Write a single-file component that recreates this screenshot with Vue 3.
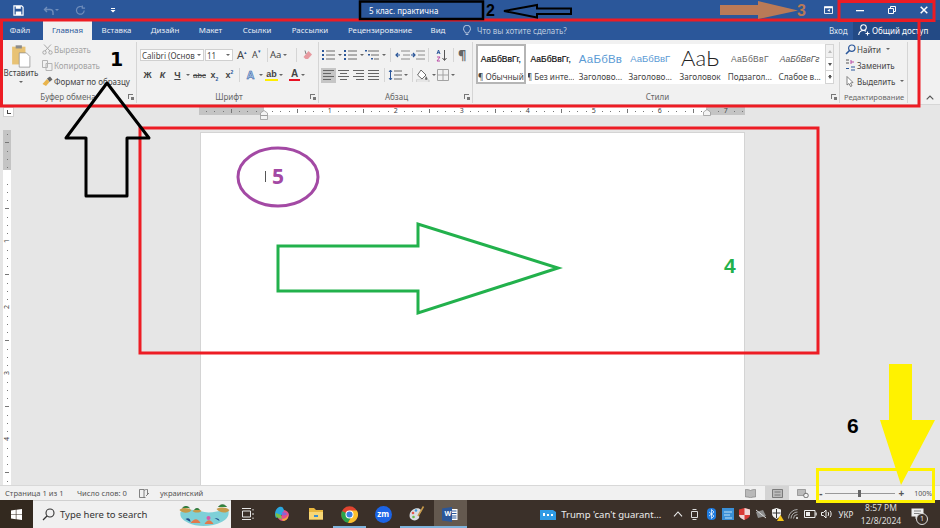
<script setup>
const tabs = [
    { name: "Вставка", w: 49 },
    { name: "Дизайн", w: 48 },
    { name: "Макет", w: 43 },
    { name: "Ссылки", w: 50 },
    { name: "Рассылки", w: 56 },
    { name: "Рецензирование", w: 84 },
    { name: "Вид", w: 32 },
];

const styleItems = [
    { name: "¶ Обычный", sample: "АаБбВвГг,", cls: "s-normal", active: true },
    { name: "¶ Без инте...", sample: "АаБбВвГг,", cls: "s-normal" },
    { name: "Заголово...", sample: "АаБбВв", cls: "s-h1" },
    { name: "Заголово...", sample: "АаБбВвГ", cls: "s-h2" },
    { name: "Заголовок", sample: "АаЬ", cls: "s-title" },
    { name: "Подзагол...", sample: "АаБбВвГ", cls: "s-sub" },
    { name: "Слабое в...", sample: "АаБбВвГг", cls: "s-em" },
];

// ruler cells are one eighth of an inch
const hTicks = [];
for (let i = -7; i <= 58; i++) hTicks.push(i);
const vTicks = [];
for (let i = -5; i <= 38; i++) vTicks.push(i);

const tickLabel = (i) => (i !== 0 && i % 8 === 0 ? Math.abs(i / 8) : "");
const tickClass = (i) => {
    if (i % 8 === 0) return "t-num";
    if (i % 4 === 0) return "t-long";
    return "t-dot";
};
</script>

<template>
    <div class="screen">
        <!-- TITLE BAR -->
        <header class="titlebar">
            <div class="qat">
                <svg class="save" width="11" height="11" viewBox="0 0 12 12">
                    <path d="M1 1h8.5L11 2.5V11H1z" fill="none" stroke="#fff" stroke-width="1.3" />
                    <path d="M3 1.2h5.5v3H3zM3 7h6v3.8H3z" fill="#fff" />
                </svg>
                <svg class="undo" width="16" height="11" viewBox="0 0 16 11">
                    <path d="M4 2 1.5 4.5 4 7M2 4.5h5a3 3 0 0 1 3 3V10" fill="none" stroke="#6f8dbb" stroke-width="1.4" />
                    <path d="M12 4h4l-2 2z" fill="#6f8dbb" />
                </svg>
                <svg class="redo" width="11" height="11" viewBox="0 0 12 12">
                    <path d="M8.5 2.6A4.2 4.2 0 1 0 10 6M8 .5v3h3" fill="none" stroke="#6f8dbb" stroke-width="1.3" />
                </svg>
                <svg class="custom" width="6" height="6" viewBox="0 0 6 6">
                    <path d="M1 1h4v1H1zM.5 3h5L3 5.6z" fill="#fff" />
                </svg>
            </div>
            <div class="doc-title">5 клас. практична</div>
            <div class="win-btns">
                <svg class="ribbon-opt" width="9" height="8" viewBox="0 0 10 9">
                    <path d="M.5.5h9v8h-9z" fill="none" stroke="#fff" />
                    <path d="M.5 1h9v1.5h-9zM6.5 3.5v3L3.5 5z" fill="#fff" />
                </svg>
                <svg class="win-min" width="8" height="8" viewBox="0 0 8 8"><path d="M0 4h8v1.3H0z" fill="#fff" /></svg>
                <svg class="win-max" width="8" height="8" viewBox="0 0 8 8">
                    <path d="M.5 2.5h5v5h-5zM2.5 2.5v-2h5v5h-2" fill="none" stroke="#fff" />
                </svg>
                <svg class="win-close" width="8" height="8" viewBox="0 0 8 8">
                    <path d="M.7.7l6.6 6.6M7.3.7.7 7.3" stroke="#fff" stroke-width="1.5" />
                </svg>
            </div>
        </header>

        <!-- TABS -->
        <nav class="tabs">
            <div class="tab tab-file">Файл</div>
            <div class="tab tab-active">Главная</div>
            <div v-for="t in tabs" :key="t.name" class="tab" :style="{ width: t.w + 'px' }">{{ t.name }}</div>
            <svg class="bulb" width="8" height="11" viewBox="0 0 8 11">
                <path d="M2.5 8C2.3 6.5.5 5.8.5 3.7a3.5 3.5 0 0 1 7 0C7.5 5.8 5.7 6.5 5.5 8zM2.7 9.5h2.6" fill="none" stroke="#c6d3e6" stroke-width=".9" />
            </svg>
            <div class="tell-me">Что вы хотите сделать?</div>
            <div class="sign-in">Вход</div>
            <div class="share">
                <svg width="13" height="12" viewBox="0 0 13 12">
                    <circle cx="5.5" cy="3.5" r="2.8" fill="none" stroke="#fff" stroke-width="1.1" />
                    <path d="M.7 11c.3-3 2.2-4.5 4.8-4.5 1 0 1.8.2 2.5.7M9.5 7.5v4M7.5 9.5h4" fill="none" stroke="#fff" stroke-width="1.1" />
                </svg>
                <span>Общий доступ</span>
            </div>
        </nav>

        <!-- RIBBON -->
        <section class="ribbon">
            <div class="group g-clip">
                <div class="group-body clip-body">
                    <div class="paste">
                        <svg width="20" height="24" viewBox="0 0 22 27">
                            <path d="M1 3h15v20H1z" fill="#e8c274" />
                            <path d="M5 1.5h7V5H5z" fill="#8b8b8b" />
                            <path d="M9 10h8l4 4v12H9z" fill="#fff" stroke="#8a8a8a" stroke-width=".8" />
                        </svg>
                        <span>Вставить</span>
                        <i class="caret"></i>
                    </div>
                    <div class="clip-list">
                        <div class="clip-row muted">
                            <svg width="11" height="11" viewBox="0 0 11 11">
                                <path d="M2 .5 8 7M9 .5 3 7" stroke="#a9a9a9" fill="none" />
                                <circle cx="2.5" cy="8.5" r="1.7" fill="none" stroke="#a9a9a9" />
                                <circle cx="8.5" cy="8.5" r="1.7" fill="none" stroke="#a9a9a9" />
                            </svg>
                            Вырезать
                        </div>
                        <div class="clip-row muted">
                            <svg width="11" height="11" viewBox="0 0 11 11">
                                <path d="M.5.5h5v7h-5zM4 3.5h6v7H4z" fill="#f1f1f1" stroke="#b3b3b3" />
                            </svg>
                            Копировать
                        </div>
                        <div class="clip-row">
                            <svg width="11" height="11" viewBox="0 0 11 11">
                                <path d="M5 2.5 8 .5l2.5 3L7.5 6z" fill="#666" />
                                <path d="M5 3 7.5 6 4 10 .5 8z" fill="#e9b44c" />
                            </svg>
                            Формат по образцу
                        </div>
                    </div>
                </div>
                <div class="group-label">
                    Буфер обмена
                    <i class="launcher"></i>
                </div>
            </div>

            <div class="group g-font">
                <div class="group-body col">
                    <div class="row row-1">
                        <div class="select sel-name">Calibri (Основ<i class="caret"></i></div>
                        <div class="select sel-size">11<i class="caret"></i></div>
                        <div class="gl gl-grow">A<sup>▴</sup></div>
                        <div class="gl gl-shrink">A<sup>▾</sup></div>
                        <div class="sep"></div>
                        <div class="gl gl-case">Aa<i class="caret"></i></div>
                        <div class="sep"></div>
                        <svg class="eraser" width="11" height="11" viewBox="0 0 11 11">
                            <path d="M6.5 1 10 4.5 6 9H3.5L1.5 7z" fill="#e79aa0" />
                            <path d="M3 .5 4 4" stroke="#7a7a7a" />
                        </svg>
                    </div>
                    <div class="row row-2">
                        <b class="fmt">Ж</b>
                        <b class="fmt it">К</b>
                        <b class="fmt un">Ч</b><i class="caret c-fmt"></i>
                        <span class="fmt strike">abc</span>
                        <b class="fmt">x<sub>2</sub></b>
                        <b class="fmt">x<sup class="sup-b">2</sup></b>
                        <div class="sep sep-2"></div>
                        <span class="fmt glow">A</span><i class="caret c-fmt"></i>
                        <span class="fmt hl">ab</span><i class="caret c-fmt"></i>
                        <span class="fmt color">A</span><i class="caret c-fmt"></i>
                    </div>
                </div>
                <div class="group-label">
                    Шрифт
                    <i class="launcher"></i>
                </div>
            </div>

            <div class="group g-para">
                <div class="group-body col">
                    <div class="row row-1 para-1">
                        <svg class="pi" width="15" height="12" viewBox="0 0 15 12">
                            <path d="M1 1h2v2H1zM1 5h2v2H1zM1 9h2v2H1z" fill="#2b579a" />
                            <path d="M5 2h9M5 6h9M5 10h9" stroke="#6a6a6a" />
                        </svg><i class="caret c-para"></i>
                        <svg class="pi" width="15" height="12" viewBox="0 0 15 12">
                            <path d="M1 1h2v2H1zM1 5h2v2H1zM1 9h2v2H1z" fill="#2b579a" />
                            <path d="M5 2h9M5 6h9M5 10h9" stroke="#6a6a6a" />
                        </svg><i class="caret c-para"></i>
                        <svg class="pi" width="15" height="12" viewBox="0 0 15 12">
                            <path d="M0 1h2v1.5H0zM3 5h2v1.5H3zM6 9h2v1.5H6z" fill="#2b579a" />
                            <path d="M3 2h11M6 6h8M9 10h5" stroke="#6a6a6a" />
                        </svg><i class="caret c-para"></i>
                        <div class="sep sep-p"></div>
                        <svg class="pi" width="15" height="12" viewBox="0 0 15 12">
                            <path d="M6 2h9M6 10h9M8 6h7" stroke="#8a8a8a" /><path d="M5 6H1M3 4 1 6l2 2" fill="none" stroke="#2b579a" stroke-width="1.2" />
                        </svg>
                        <svg class="pi" width="15" height="12" viewBox="0 0 15 12">
                            <path d="M6 2h9M6 10h9M8 6h7" stroke="#8a8a8a" /><path d="M1 6h4M3 4l2 2-2 2" fill="none" stroke="#2b579a" stroke-width="1.2" />
                        </svg>
                        <div class="sep sep-p"></div>
                        <svg class="pi sort" width="13" height="13" viewBox="0 0 13 13">
                            <path d="M2 5 3.5 1 5 5M2.5 3.7h2" fill="none" stroke="#2b579a" />
                            <path d="M2 8h3l-3 4h3" fill="none" stroke="#b94aa5" />
                            <path d="M9.5 1v10M7.5 9l2 2.5 2-2.5" fill="none" stroke="#555" />
                        </svg>
                        <div class="sep sep-p"></div>
                        <span class="pilcrow">¶</span>
                    </div>
                    <div class="row row-2 para-2">
                        <div class="al al-on"><i></i><i class="sh"></i><i></i><i class="sh"></i></div>
                        <div class="al al-c"><i></i><i class="sh"></i><i></i><i class="sh"></i></div>
                        <div class="al al-r"><i></i><i class="sh"></i><i></i><i class="sh"></i></div>
                        <div class="al"><i></i><i></i><i></i><i></i></div>
                        <div class="sep sep-a"></div>
                        <svg class="pi" width="14" height="12" viewBox="0 0 14 12">
                            <path d="M2.5 1v10M1 3l1.5-2L4 3M1 9l1.5 2L4 9" fill="none" stroke="#2b579a" />
                            <path d="M6 2h8M6 6h8M6 10h8" stroke="#6a6a6a" />
                        </svg><i class="caret c-para"></i>
                        <div class="sep sep-a"></div>
                        <svg class="pi" width="14" height="13" viewBox="0 0 14 13">
                            <path d="M5 1 10 6 6 10 1.5 6z" fill="#fff" stroke="#6a6a6a" />
                            <path d="M10 7c1 1.5 1.5 2 1.5 2.8a1 1 0 0 1-2.5 0z" fill="#6a6a6a" />
                            <path d="M0 11h13v2H0z" fill="#fff" stroke="#999" stroke-width=".5" />
                        </svg><i class="caret c-para"></i>
                        <svg class="pi" width="12" height="12" viewBox="0 0 12 12">
                            <path d="M.5.5h11v11H.5zM6 .5v11M.5 6h11" fill="none" stroke="#a3a3a3" />
                        </svg><i class="caret c-para"></i>
                    </div>
                </div>
                <div class="group-label">
                    Абзац
                    <i class="launcher"></i>
                </div>
            </div>

            <div class="group g-styles">
                <div class="group-body gallery-wrap">
                    <div class="gallery">
                        <div v-for="s in styleItems" :key="s.cls + s.name" class="style-item" :class="{ active: s.active }">
                            <div class="sample" :class="s.cls">{{ s.sample }}</div>
                            <div class="style-name">{{ s.name }}</div>
                        </div>
                    </div>
                    <div class="gallery-scroll">
                        <div class="gs gs-off"><i class="tri up"></i></div>
                        <div class="gs"><i class="tri"></i></div>
                        <div class="gs"><i class="tri more"></i></div>
                    </div>
                </div>
                <div class="group-label">
                    Стили
                    <i class="launcher"></i>
                </div>
            </div>

            <div class="group g-edit">
                <div class="group-body edit-list">
                    <div class="clip-row">
                        <svg width="11" height="11" viewBox="0 0 11 11">
                            <circle cx="6.8" cy="4.2" r="3.2" fill="none" stroke="#2b579a" stroke-width="1.2" />
                            <path d="M4.5 6.5 1 10" stroke="#2b579a" stroke-width="1.6" />
                        </svg>
                        Найти<i class="caret c-edit"></i>
                    </div>
                    <div class="clip-row">
                        <svg width="11" height="12" viewBox="0 0 11 12">
                            <path d="M1 1h3M1 4h3" stroke="#555" />
                            <path d="M6 1v4M6 3h3" stroke="#b94aa5" />
                            <path d="M1 9.5h3M6 8h4M6 11h4" stroke="#2b579a" />
                        </svg>
                        Заменить
                    </div>
                    <div class="clip-row">
                        <svg width="11" height="11" viewBox="0 0 11 11">
                            <path d="M2 .5V9l2-1.500 1.500 3 1.500-.7L5.500 7 8 6.500z" fill="#fff" stroke="#666" stroke-width=".8" />
                        </svg>
                        Выделить<i class="caret c-edit"></i>
                    </div>
                </div>
                <div class="group-label">Редактирование</div>
            </div>
            <svg class="collapse" width="8" height="5" viewBox="0 0 8 5">
                <path d="M.7 4.3 4 1l3.3 3.3" fill="none" stroke="#555" stroke-width="1.2" />
            </svg>
        </section>

        <!-- HORIZONTAL RULER -->
        <div class="ruler-row">
            <div class="tab-stop"><i></i></div>
            <div class="h-ruler">
                <div class="h-ticks">
                    <span v-for="i in hTicks" :key="i" class="h-tick" :class="tickClass(i)">{{ tickLabel(i) }}</span>
                </div>
            </div>
            <svg class="indent ind-left" width="8" height="10" viewBox="0 0 8 10">
                <path d="M4 .5 7.500 3v2.500H.5V3zM.5 5.500h7v4h-7z" fill="#f4f4f4" stroke="#9a9a9a" stroke-width=".8" />
            </svg>
            <svg class="indent ind-right" width="8" height="7" viewBox="0 0 8 7">
                <path d="M4 .5 7.500 3v3.500H.5V3z" fill="#f4f4f4" stroke="#9a9a9a" stroke-width=".8" />
            </svg>
        </div>

        <!-- DOCUMENT -->
        <main class="doc-area">
            <div class="v-ruler">
                <span v-for="i in vTicks" :key="i" class="v-tick" :class="tickClass(i)"><em>{{ tickLabel(i) }}</em></span>
            </div>
            <div class="page">
                <div class="page-line"><i class="cursor"></i><span class="five">5</span></div>
            </div>
        </main>

        <!-- STATUS BAR -->
        <footer class="statusbar">
            <span class="st-page">Страница 1 из 1</span>
            <span class="st-words">Число слов: 0</span>
            <svg class="st-book" width="11" height="9" viewBox="0 0 11 9">
                <path d="M.5.5H5v8H.5zM5 1.500c1-1 2-1 3.500-1v5M5 8.500h1.500M7 7l3-3" fill="none" stroke="#666" stroke-width=".8" />
            </svg>
            <span class="st-lang">украинский</span>
            <div class="st-right">
                <svg class="view" width="11" height="9" viewBox="0 0 11 9">
                    <path d="M5.5 1.500C4 .5 2 .5.5.5V8c2 0 3.500 0 5 1 1.500-1 3-1 5-1V.5C9 .5 7 .5 5.500 1.500z" fill="#b9b9b9" stroke="#777" stroke-width=".6" />
                </svg>
                <div class="view-on">
                    <svg width="11" height="9" viewBox="0 0 11 9">
                        <path d="M.5.5h10v8H.5z" fill="#bbb" stroke="#666" stroke-width=".8" />
                        <path d="M2.5 3h6M2.5 6h6" stroke="#777" />
                    </svg>
                </div>
                <svg class="view web" width="12" height="9" viewBox="0 0 12 9">
                    <path d="M.5.5h8v6h-8z" fill="#bbb" stroke="#777" stroke-width=".6" />
                    <circle cx="9" cy="6.500" r="2.300" fill="#f1f1f1" stroke="#555" stroke-width=".8" />
                </svg>
                <b class="zoom-m">-</b>
                <div class="slider"><i></i></div>
                <b class="zoom-p">+</b>
                <span class="zoom-v">100%</span>
            </div>
        </footer>

        <!-- TASKBAR -->
        <div class="taskbar">
            <div class="start">
                <svg width="11" height="11" viewBox="0 0 11 11">
                    <path d="M0 1.500 4.800.8v4.400H0zM5.400.7 11 0v5.200H5.400zM0 5.800h4.800v4.400L0 9.500zM5.400 5.800H11V11l-5.600-.8z" fill="#fff" />
                </svg>
            </div>
            <div class="search">
                <svg class="search-ic" width="13" height="13" viewBox="0 0 13 13">
                    <circle cx="8" cy="5" r="4" fill="none" stroke="#333" stroke-width="1.100" />
                    <path d="M5 8 1 12" stroke="#333" stroke-width="1.200" />
                </svg>
                <span>Type here to search</span>
                <svg class="island" width="53" height="26" viewBox="0 0 52 26">
                    <path d="M2 10c8-4 16-2 24 0s16-3 24-1c1 6-3 9-7 11-9 5-25 5-33 1C4 18 1 15 2 10z" fill="#7ed0d8" />
                    <path d="M1 8c3-3 9-2 12 0-1 3-9 4-12 0zM38 7c4-2 9-2 13 1-3 4-10 3-13-1zM14 9c3-2 7-2 9 0-2 2-7 2-9 0z" fill="#c59a4b" />
                    <path d="M4 6c2-2 5-2 7 0M40 5c2-3 6-3 8 0M16 8c1-2 4-2 5 0" fill="#2f8a3e" stroke="#2f6e36" />
                    <path d="M12 21c4-5 7-5 10 0zM26 22c3-5 6-5 9 0z" fill="#e07a4c" />
                    <path d="M7 17c3-2 5 0 5 3zM36 16c3 0 5 1 5 3z" fill="#1f4d8f" />
                    <circle cx="30" cy="16" r="2" fill="#d65aa8" />
                </svg>
            </div>
            <div class="task-icons">
                <div class="ti">
                    <svg width="13" height="12" viewBox="0 0 13 12">
                        <path d="M.5 3h8v6h-8zM0 .5h9M0 11.500h9M11 1v1.500M11 5v2M11 9.500V11" fill="none" stroke="#e8e8e8" />
                    </svg>
                </div>
                <div class="ti">
                    <svg width="16" height="16" viewBox="0 0 16 16">
                        <path d="M5 1c3-1 4 0 5 3l2 4-5 1-5 3C0 9 1 3 5 1z" fill="#2aa7df" />
                        <path d="M10 4c2 .5 5 2 5 5-.5 3-2 5-6 6-2 0-4-1-5-3l4-3z" fill="#e34f8c" />
                        <path d="M4 12c-2-1-3-3-2-5l5 2 1 4z" fill="#79c04a" />
                        <path d="M8 13c2 0 5-1 6-4 .5 2-.5 5-4 6-1 0-2-1-2-2z" fill="#f4a93b" />
                        <path d="M8 6c3 0 4 1 5 2-1 1-3 2-5 1z" fill="#8a63d2" />
                    </svg>
                </div>
                <div class="ti">
                    <svg width="16" height="14" viewBox="0 0 16 14">
                        <path d="M1 1h5l2 2h7v9.500H1z" fill="#e9b73f" />
                        <path d="M1 5h14v7.500H1z" fill="#f8d775" />
                        <path d="M6 8h4v2H6z" fill="#3b8ed0" />
                    </svg>
                </div>
                <div class="ti ti-run">
                    <svg width="17" height="17" viewBox="0 0 17 17">
                        <circle cx="8.5" cy="8.5" r="8.3" fill="#e2442f" />
                        <path d="M1 5a8.300 8.300 0 0 0 6 11.700L11 10z" fill="#2ca34a" />
                        <path d="M8.5 4.500h7.400A8.300 8.300 0 0 1 7 16.700L11 10z" fill="#fbc02d" />
                        <circle cx="8.5" cy="8.5" r="4" fill="#fff" />
                        <circle cx="8.5" cy="8.5" r="3" fill="#3c7fe0" />
                    </svg>
                </div>
                <div class="ti">
                    <div class="zm">zm</div>
                </div>
                <div class="ti ti-run">
                    <svg width="17" height="16" viewBox="0 0 17 16">
                        <path d="M2 7c2-5 9-6 11-3 1 2-1 3-2 4s1 2 0 4c-2 3-6 3-8 1C1 11 1.500 9 2 7z" fill="#d9dde2" />
                        <circle cx="5" cy="7" r="1.300" fill="#e2574c" />
                        <circle cx="8" cy="4.500" r="1.300" fill="#3f9bd9" />
                        <circle cx="5.500" cy="11" r="1.300" fill="#6cbb4b" />
                        <path d="M10 10 15.500.5" stroke="#c79a4a" stroke-width="1.600" />
                    </svg>
                </div>
                <div class="ti ti-word">
                    <svg width="16" height="15" viewBox="0 0 16 15">
                        <path d="M9 2h6.500v11H9z" fill="#fff" />
                        <path d="M10 4h4.500M10 6.500h4.500M10 9h4.500M10 11h4.500" stroke="#2b579a" />
                        <path d="M0 1.500 10 0v15L0 13.500z" fill="#2b579a" />
                    </svg>
                    <span class="w-mark">W</span>
                </div>
            </div>
            <div class="news">
                <svg width="16" height="11" viewBox="0 0 16 11">
                    <path d="M0 1h13l3 2v8H0z" fill="#2f9be5" />
                    <path d="M3 4h2v3H3zM7 5h2v2H7zM11 5h2v2h-2z" fill="#fff" />
                </svg>
                <span>Trump 'can't guarant...</span>
            </div>
            <div class="tray">
                <div class="tc"><svg width="10" height="6" viewBox="0 0 10 6"><path d="M1 5.300 5 1l4 4.300" fill="none" stroke="#eee" stroke-width="1.100" /></svg></div>
                <div class="tc"><svg width="9" height="11" viewBox="0 0 9 11"><path d="M1.500 2.500h6v6h-6zM2.500.5h4M2.500 10.500h4" fill="none" stroke="#ddd" /></svg></div>
                <div class="tc"><svg width="9" height="12" viewBox="0 0 9 12"><rect width="9" height="12" rx="4" fill="#1f7be0" /><path d="M2 4l5 4-2.500 2.500v-9L7 4 2 8" fill="none" stroke="#fff" stroke-width=".7" /></svg></div>
                <div class="tc"><svg width="12" height="12" viewBox="0 0 12 12"><path d="M0 0h12v12H0z" fill="#3a8fd6" /><path d="M2 4h8M2 7h6M3 10h7" stroke="#bfe2f7" /></svg></div>
                <div class="tc"><svg width="11" height="12" viewBox="0 0 11 12"><path d="M0 1.500 5.500 0 11 1.500V7c0 2-3 4-5.500 5C3 11 0 9 0 7z" fill="#d93a35" /><path d="M5.500 0v12H5C3 11 0 9 0 7h11c0-1 0-3 0-5.500z" fill="#f3f3f3" opacity=".85" /></svg></div>
                <div class="tc"><svg width="12" height="10" viewBox="0 0 12 10"><path d="M1 3 8 1l3 6-8 2z" fill="#8d8d8d" /><path d="M1 1l10 8" stroke="#ddd" /></svg></div>
                <div class="tc"><svg width="13" height="13" viewBox="0 0 13 13"><path d="M1 1.500 5.500 0 10 1.500V6c0 2-2.500 4-4.500 5C3.500 10 1 8 1 6z" fill="#f3f3f3" /><path d="M5.500 1v9M1.500 5h8" stroke="#333" /><path d="M9.500 7 13 13H6z" fill="#f5c518" /></svg></div>
                <div class="tc"><svg width="12" height="10" viewBox="0 0 12 10"><path d="M.5 9.500a9 9 0 0 1 9-9M3 9.500a6.500 6.500 0 0 1 6.500-6.500M5.500 9.500a4 4 0 0 1 4-4" fill="none" stroke="#aaa" /><circle cx="9" cy="9" r="1" fill="#eee" /></svg></div>
                <div class="tc"><svg width="13" height="8" viewBox="0 0 13 8"><path d="M.5.5H11v7H.5z" fill="none" stroke="#eee" /><path d="M2 2h4v4H2z" fill="#eee" /><path d="M11.500 2.500h1.200v3h-1.200z" fill="#eee" /></svg></div>
                <div class="tc"><svg width="12" height="10" viewBox="0 0 12 10"><path d="M.5 3.500h2L5 1v8L2.500 6.500h-2z" fill="none" stroke="#eee" /><path d="M7 3c.8 1 .8 3 0 4M9 1.800c1.500 1.700 1.500 4.700 0 6.400" fill="none" stroke="#eee" /></svg></div>
                <span class="tr-lang">УКР</span>
                <div class="clock"><span>8:57 PM</span><span>12/8/2024</span></div>
                <div class="notif">
                    <svg width="13" height="12" viewBox="0 0 13 12"><path d="M.5.5h12v8H7L4.500 11V8.500h-4z" fill="#eee" /><path d="M3 3h7M3 5.500h7" stroke="#555" stroke-width=".7" /></svg>
                    <span class="badge">1</span>
                </div>
            </div>
        </div>

        <!-- ANNOTATIONS DRAWN OVER THE SCREENSHOT -->
        <svg class="marks" width="940" height="528" viewBox="0 0 940 528">
            <g fill="none" stroke="#ed1c24" stroke-width="3">
                <rect x="1.5" y="20" width="917.5" height="86" />
                <rect x="839" y="1.5" width="95" height="19" />
                <rect x="140" y="128" width="678" height="225" />
            </g>
            <rect x="360" y="1.5" width="123" height="17.5" fill="none" stroke="#000" stroke-width="2.5" />
            <path d="M504 11 537 5v3.500h34v5.500h-34v3.500z" fill="#2b579a" stroke="#000" stroke-width="2" />
            <path d="M720 5h38V1l40 9.500L758 19v-4h-38z" fill="#b97a57" />
            <path d="M107 83 149 138H127V196H86V138H66z" fill="none" stroke="#000" stroke-width="3" stroke-linejoin="round" />
            <ellipse cx="278" cy="177" rx="40" ry="29" fill="none" stroke="#a349a4" stroke-width="3" />
            <path d="M278 246H418V224L558 268 418 313V291H278z" fill="none" stroke="#22b14c" stroke-width="3" />
            <rect x="817.5" y="469.5" width="116" height="32" fill="none" stroke="#fff200" stroke-width="3" />
            <path d="M889 364h23v56h23l-34 65-21-65h9z" fill="#fff200" />
        </svg>
        <span class="num n1">1</span>
        <span class="num n2">2</span>
        <span class="num n3">3</span>
        <span class="num n4">4</span>
        <span class="num n6">6</span>
    </div>
</template>

<style>
html,
body {
    margin: 0;
    background: #e6e6e6;
}
</style>

<style scoped>
.screen {
    position: relative;
    width: 940px;
    height: 528px;
    display: flex;
    flex-direction: column;
    overflow: hidden;
    font-family: "Noto Sans", "Open Sans", sans-serif;
    font-size: 8px;
    color: #444;
}

i,
em {
    font-style: normal;
}

.caret {
    display: inline-block;
    width: 0;
    height: 0;
    border-left: 2.5px solid transparent;
    border-right: 2.5px solid transparent;
    border-top: 2.5px solid #666;
}

/* title bar */
.titlebar {
    height: 20px;
    flex: none;
    display: flex;
    align-items: center;
    background: #2b579a;
    color: #fff;
}

.qat {
    width: 369px;
    display: flex;
    align-items: center;
    padding-left: 13px;
    box-sizing: border-box;
}

.undo {
    margin-left: 19px;
}

.redo {
    margin-left: 16px;
}

.custom {
    margin-left: 24px;
}

.doc-title {
    font-size: 8px;
    color: #fff;
    flex: 1;
}

.win-btns {
    display: flex;
    align-items: center;
    padding-right: 12px;
}

.win-min {
    margin-left: 23px;
}

.win-max {
    margin-left: 24px;
}

.win-close {
    margin-left: 24px;
}

/* tabs */
.tabs {
    height: 20px;
    flex: none;
    display: flex;
    align-items: center;
    background: #2b579a;
    color: #e8edf5;
    font-size: 7.9px;
}

.tab {
    height: 20px;
    line-height: 20px;
    text-align: center;
    flex: none;
}

.tab-file {
    width: 43px;
    box-sizing: border-box;
    padding-right: 3px;
}

.tab-active {
    width: 49px;
    background: #f1f1f1;
    color: #2b579a;
}

.bulb {
    margin-left: 9px;
}

.tell-me {
    margin-left: 6px;
    color: #b9c8de;
    flex: 1;
    font-size: 8px;
}

.sign-in {
    width: 24px;
    color: #dbe3ef;
    font-size: 8px;
}

.share {
    width: 87px;
    height: 20px;
    display: flex;
    align-items: center;
    gap: 1px;
    box-sizing: border-box;
    padding-left: 5px;
    background: #234a85;
    color: #fff;
    font-size: 8px;
}

/* ribbon */
.ribbon {
    position: relative;
    height: 65px;
    flex: none;
    display: flex;
    box-sizing: border-box;
    background: #f1f1f1;
    border-bottom: 1px solid #d6d6d6;
}

.group {
    display: flex;
    flex-direction: column;
    box-sizing: border-box;
    height: 61px;
    margin-top: 2px;
    border-right: 1px solid #d5d5d5;
    flex: none;
}

.group-body {
    flex: 1;
    min-height: 0;
}

.group-label {
    position: relative;
    height: 12px;
    line-height: 12px;
    text-align: center;
    font-size: 8px;
    color: #666;
}

.launcher {
    position: absolute;
    right: 3px;
    top: 3px;
    width: 5px;
    height: 5px;
    border-left: 1px solid #777;
    border-top: 1px solid #777;
    box-sizing: border-box;
}

.launcher::after {
    content: "";
    position: absolute;
    right: -1px;
    bottom: -1px;
    width: 3px;
    height: 3px;
    background: #777;
}

.g-clip {
    width: 137px;
}

.clip-body {
    display: flex;
}

.paste {
    width: 42px;
    display: flex;
    flex-direction: column;
    align-items: center;
    padding-top: 2px;
    font-size: 8px;
    color: #444;
}

.paste span {
    line-height: 10px;
}

.paste .caret {
    margin-top: 3px;
}

.clip-list,
.edit-list {
    display: flex;
    flex-direction: column;
    margin-top: -1px;
}

.clip-row {
    height: 16px;
    display: flex;
    align-items: center;
    font-size: 8px;
    white-space: nowrap;
    color: #444;
}

.clip-row svg {
    width: 11px;
    flex: none;
    margin-right: 1px;
}

.muted {
    color: #a3a3a3;
}

.c-edit {
    margin-left: 5px;
}

.col {
    display: flex;
    flex-direction: column;
}

.row {
    display: flex;
    align-items: center;
}

.row-1 {
    height: 16px;
    margin-top: 5px;
}

.row-2 {
    height: 15px;
    margin-top: 4.5px;
}

.g-font {
    width: 182px;
    padding-left: 3px;
}

.select {
    height: 12px;
    line-height: 11px;
    background: #fff;
    border: 1px solid #d0d0d0;
    box-sizing: border-box;
    position: relative;
    padding-left: 1px;
    font-size: 8px;
    white-space: nowrap;
    color: #444;
    overflow: hidden;
}

.select .caret {
    position: absolute;
    right: 2px;
    top: 4px;
}

.sel-name {
    width: 64px;
}

.sel-size {
    width: 28px;
    margin-left: 1px;
}

.gl {
    font-size: 11px;
    line-height: 14px;
    color: #444;
    white-space: nowrap;
}

.gl sup {
    font-size: 5px;
    color: #2b579a;
    vertical-align: 5px;
    line-height: 0;
}

.gl-grow {
    margin-left: 4px;
    width: 15px;
}

.gl-shrink {
    width: 13px;
    font-size: 9px;
}

.gl-case {
    width: 24px;
    font-size: 9.5px;
    margin-left: 2px;
}

.gl-case .caret {
    margin-left: 2px;
    vertical-align: 2px;
}

.sep {
    width: 1px;
    height: 14px;
    background: #d5d5d5;
    flex: none;
    margin-left: 2px;
}

.eraser {
    margin-left: 5px;
}

.fmt {
    width: 15px;
    flex: none;
    text-align: center;
    font-size: 9px;
    line-height: 13px;
    color: #444;
    font-family: "Liberation Sans", sans-serif;
}

.fmt sub,
.fmt sup {
    font-size: 5px;
    line-height: 0;
    color: #2b579a;
}

.sup-b {
    color: #444;
}

.it {
    font-style: italic;
}

.un {
    text-decoration: underline;
}

.c-fmt {
    margin: 0 2px 0 1px;
}

.strike {
    text-decoration: line-through;
    font-size: 8px;
}

.sep-2 {
    margin: 0 3px 0 2px;
}

.glow {
    font-size: 11px;
    font-weight: bold;
    color: #a7c5ea;
    -webkit-text-stroke: 0.5px #2b579a;
}

.hl {
    border-bottom: 2.5px solid #ffee00;
    line-height: 10px;
    width: 13px;
    font-weight: bold;
}

.color {
    border-bottom: 2.5px solid #e81123;
    line-height: 10px;
    width: 11px;
    margin-left: 4px;
    font-size: 10px;
    font-weight: bold;
}

.g-para {
    width: 154px;
    padding-left: 2px;
}

.para-1 .pi {
    flex: none;
}

.c-para {
    margin: 0 1px 0 2px;
    flex: none;
}

.sep-p {
    margin: 0 4px 0 3px;
}

.sort {
    margin: 0 2px;
}

.pilcrow {
    font-size: 13px;
    line-height: 14px;
    font-weight: bold;
    color: #666;
}

.al {
    width: 15px;
    height: 15px;
    flex: none;
    display: flex;
    flex-direction: column;
    gap: 2px;
    padding: 2px;
    box-sizing: border-box;
    align-items: flex-start;
}

.al i {
    display: block;
    width: 100%;
    height: 1px;
    background: #666;
}

.al i.sh {
    width: 70%;
}

.al-on {
    background: #c6c6c6;
}

.al-c {
    align-items: center;
}

.al-r {
    align-items: flex-end;
}

.sep-a {
    margin: 0 3px;
}

.g-styles {
    width: 367px;
    padding: 2px 0 0 3px;
}

.gallery-wrap {
    display: flex;
    height: 40px;
    flex: none;
}

.g-styles .group-label {
    margin-top: auto;
}

.gallery {
    display: flex;
    width: 349px;
    height: 40px;
    background: #fff;
    flex: none;
}

.style-item {
    width: 49.8px;
    flex: none;
    box-sizing: border-box;
    display: flex;
    flex-direction: column;
    align-items: center;
    overflow: hidden;
    padding-top: 1px;
    border: 2px solid transparent;
}

.style-item.active {
    border-color: #b5b5b5;
}

.sample {
    height: 24px;
    line-height: 24px;
    white-space: nowrap;
    color: #111;
    font-family: "Liberation Sans", sans-serif;
    font-size: 8.5px;
}

.s-normal {
    -webkit-text-stroke: 0.2px #111;
}

.s-h1 {
    font-size: 11.5px;
    color: #5b9bd5;
    letter-spacing: 0.2px;
}

.s-h2 {
    font-size: 9.5px;
    color: #5b9bd5;
}

.s-title {
    font-family: "Lato", sans-serif;
    font-size: 22px;
    font-weight: 300;
    color: #222;
    line-height: 22px;
}

.s-sub {
    font-size: 8.5px;
    color: #666;
    letter-spacing: 0.3px;
}

.s-em {
    font-size: 8.5px;
    font-style: italic;
    color: #555;
}

.style-name {
    font-size: 8.2px;
    line-height: 11px;
    white-space: nowrap;
    color: #444;
}

.gallery-scroll {
    width: 9px;
    display: flex;
    flex-direction: column;
    background: #fff;
    border: 1px solid #d4d4d4;
    box-sizing: border-box;
}

.gs {
    flex: 1;
    display: flex;
    align-items: center;
    justify-content: center;
    border-bottom: 1px solid #d4d4d4;
}

.gs:last-child {
    border-bottom: 0;
}

.gs-off {
    background: #f1f1f1;
}

.tri {
    width: 0;
    height: 0;
    border-left: 2.5px solid transparent;
    border-right: 2.5px solid transparent;
    border-top: 3px solid #555;
}

.tri.up {
    border-top: 0;
    border-bottom: 3px solid #bbb;
}

.tri.more {
    box-shadow: 0 -2px 0 -1px #555;
}

.g-edit {
    width: 68px;
    padding-left: 5px;
}

.g-edit .group-label {
    white-space: nowrap;
    text-align: left;
    font-size: 7.5px;
    margin-left: -1px;
}

.collapse {
    position: absolute;
    left: 926px;
    top: 55px;
}

/* rulers */
.ruler-row {
    position: relative;
    height: 13px;
    flex: none;
    display: flex;
    background: #e6e6e6;
}

.tab-stop {
    width: 11px;
    height: 10px;
    margin: 2px 0 0 3px;
    background: #fff;
    border: 1px solid #d2d2d2;
    box-sizing: border-box;
    position: relative;
}

.tab-stop i {
    position: absolute;
    left: 3px;
    top: 2px;
    width: 4px;
    height: 4px;
    border-left: 1px solid #444;
    border-bottom: 1px solid #444;
    box-sizing: border-box;
}

.h-ruler {
    width: 546px;
    height: 8px;
    margin: 2px 0 0 185px;
    overflow: hidden;
    background: linear-gradient(90deg, #c4c4c4 0 65px, #fff 65px 507px, #c4c4c4 507px);
}

.h-ticks {
    display: flex;
    margin-left: 3px;
    height: 8px;
}

.h-tick {
    width: 8.25px;
    flex: none;
    height: 8px;
    line-height: 8px;
    font-size: 7px;
    text-align: center;
    color: #444;
    position: relative;
}

.t-dot::before,
.t-long::before {
    content: "";
    position: absolute;
    background: #777;
}

.h-tick.t-dot::before {
    left: 4px;
    top: 3.5px;
    width: 1px;
    height: 1px;
}

.h-tick.t-long::before {
    left: 4px;
    top: 2px;
    width: 1px;
    height: 4px;
}

.indent {
    position: absolute;
}

.ind-left {
    left: 260px;
    top: 5px;
}

.ind-right {
    left: 703px;
    top: 4px;
}

.doc-area {
    flex: 1;
    min-height: 0;
    display: flex;
    align-items: flex-start;
    background: #e6e6e6;
    padding-top: 14px;
    overflow: hidden;
}

.v-ruler {
    width: 8px;
    margin: -2px 0 0 3px;
    height: 355px;
    flex: none;
    overflow: hidden;
    background: linear-gradient(180deg, #c4c4c4 0 40px, #fff 40px);
    display: flex;
    flex-direction: column;
    align-items: stretch;
}

.v-tick {
    height: 8.25px;
    flex: none;
    position: relative;
    font-size: 7px;
    line-height: 8px;
    text-align: center;
    color: #444;
}

.v-tick em {
    display: block;
    transform: rotate(-90deg);
}

.v-tick.t-dot::before {
    left: 3.5px;
    top: 4px;
    width: 1px;
    height: 1px;
}

.v-tick.t-long::before {
    left: 2px;
    top: 4px;
    width: 4px;
    height: 1px;
}

.page {
    width: 545px;
    height: 400px;
    margin-left: 189px;
    background: #fff;
    border: 1px solid #d4d4d4;
    box-sizing: border-box;
    flex: none;
    padding: 30px 0 0 64px;
}

.page-line {
    display: flex;
    align-items: center;
    height: 26px;
}

.cursor {
    width: 1px;
    height: 11px;
    background: #555;
}

.five {
    margin-left: 6px;
    color: #a349a4;
    font: bold 21px "Noto Sans", sans-serif;
}

/* status bar */
.statusbar {
    height: 15px;
    flex: none;
    display: flex;
    align-items: center;
    background: #f1f1f1;
    color: #555;
    font-size: 7.6px;
    border-top: 1px solid #d8d8d8;
    box-sizing: border-box;
}

.st-page {
    margin-left: 5px;
    width: 72px;
}

.st-words {
    width: 62px;
}

.st-lang {
    margin-left: 10px;
}

.st-right {
    margin-left: auto;
    display: flex;
    align-items: center;
    padding-right: 8px;
}

.view-on {
    width: 24px;
    height: 14px;
    margin: 0 8px 0 9px;
    background: #d4d4d4;
    display: flex;
    align-items: center;
    justify-content: center;
}

.web {
    margin-right: 10px;
}

.zoom-m,
.zoom-p {
    font-size: 10px;
    line-height: 10px;
    color: #555;
}

.slider {
    position: relative;
    width: 70px;
    height: 1px;
    margin: 0 3px;
    background: #999;
}

.slider i {
    position: absolute;
    left: 33px;
    top: -3px;
    width: 3px;
    height: 7px;
    background: #666;
}

.zoom-p {
    margin-right: 10px;
}

.zoom-v {
    white-space: nowrap;
    font-size: 7px;
    color: #555;
}

/* taskbar */
.taskbar {
    height: 28px;
    flex: none;
    display: flex;
    background: #3b3029;
    color: #eee;
    font-family: "Noto Sans", sans-serif;
}

.start {
    width: 33px;
    flex: none;
    display: flex;
    align-items: center;
    justify-content: center;
    background: #33291f;
}

.search {
    width: 198px;
    flex: none;
    display: flex;
    align-items: center;
    background: #f0f0f0;
    border-top: 1px solid #d0d0d0;
    box-sizing: border-box;
    padding-left: 9px;
    font-size: 9.5px;
    color: #333;
}

.search span {
    margin-left: 5px;
    flex: 1;
    white-space: nowrap;
}

.search-ic,
.island {
    flex: none;
}

.task-icons {
    display: flex;
    flex: none;
    padding-left: 1px;
}

.ti {
    width: 33.6px;
    display: flex;
    align-items: center;
    justify-content: center;
    position: relative;
    box-sizing: border-box;
}

.ti-run {
    box-shadow: inset 0 -2px 0 #7eb3dc;
}

.ti-word {
    background: #64594f;
    box-shadow: inset 0 -2px 0 #7eb3dc;
}

.w-mark {
    position: absolute;
    left: 11px;
    top: 10px;
    color: #fff;
    font-size: 7px;
    line-height: 8px;
    font-weight: bold;
}

.zm {
    width: 17px;
    height: 17px;
    border-radius: 50%;
    background: #1c64e6;
    color: #fff;
    font-size: 8px;
    font-weight: bold;
    line-height: 16px;
    text-align: center;
}

.news {
    display: flex;
    align-items: center;
    gap: 5px;
    margin-left: 73px;
    font-size: 9.5px;
    white-space: nowrap;
    color: #eee;
}

.tray {
    margin-left: auto;
    display: flex;
    align-items: center;
    padding-right: 11px;
    flex: none;
}

.tc {
    width: 16.5px;
    display: flex;
    align-items: center;
    justify-content: center;
    flex: none;
}

.tr-lang {
    width: 22px;
    text-align: center;
    font-size: 8px;
}

.clock {
    width: 48px;
    display: flex;
    flex-direction: column;
    align-items: center;
    gap: 2px;
    font-size: 8.5px;
    line-height: 11px;
    color: #ddd;
}

.notif {
    position: relative;
    width: 24px;
    display: flex;
    justify-content: center;
}

.badge {
    position: absolute;
    right: 1px;
    bottom: -5px;
    width: 10px;
    height: 10px;
    border: 1px solid #ddd;
    border-radius: 50%;
    background: #3b3029;
    font-size: 7px;
    line-height: 10px;
    text-align: center;
    color: #eee;
}

/* annotations */
.marks {
    position: absolute;
    left: 0;
    top: 0;
    pointer-events: none;
}

.num {
    position: absolute;
    font: bold 21px "Liberation Sans", sans-serif;
    line-height: 24px;
}

.n1 {
    left: 110px;
    top: 47px;
    font-family: "DejaVu Sans", sans-serif;
    font-size: 19px;
    color: #000;
}

.n2 {
    left: 486px;
    top: 0;
    font-size: 16px;
    line-height: 22px;
    color: #000;
}

.n3 {
    left: 797px;
    top: 0;
    font-size: 16px;
    line-height: 22px;
    color: #b97a57;
}

.n4 {
    left: 724px;
    top: 254px;
    color: #22b14c;
}

.n6 {
    left: 847px;
    top: 414px;
    color: #000;
}
</style>
